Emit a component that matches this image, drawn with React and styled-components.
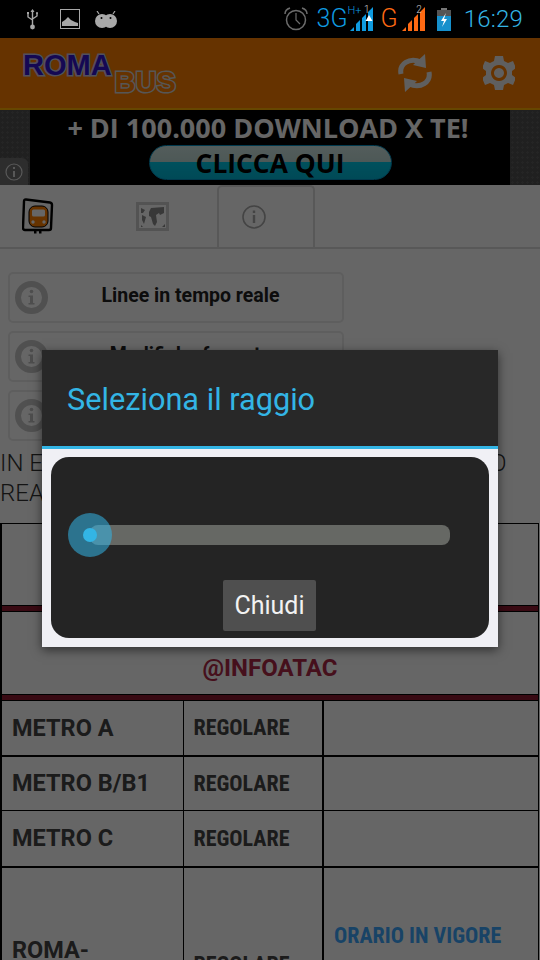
import React from "react";
import styled, { createGlobalStyle } from "styled-components";

const Global = createGlobalStyle`
  html, body {
    margin: 0;
    padding: 0;
    background: #000;
  }
  body {
    font-family: Roboto, "Liberation Sans", sans-serif;
  }
`;

const Phone = styled.div`
  position: relative;
  width: 540px;
  height: 960px;
  overflow: hidden;
  background: #fff;
`;

/* status bar */
const StatusBar = styled.div`
  height: 38px;
  background: #000;
  display: flex;
  align-items: center;
  justify-content: space-between;
  padding: 0 17px 0 27px;
  box-sizing: border-box;
`;
const StatusGroup = styled.div`
  display: flex;
  align-items: center;
`;
const NetText = styled.span`
  font-weight: 300;
  font-size: 25px;
  line-height: 38px;
  color: ${(p) => p.$color};
`;
const NetGroup = styled.div`
  position: relative;
  display: flex;
  align-items: center;
  margin-left: ${(p) => p.$left}px;
`;
const TinyMark = styled.span`
  position: absolute;
  top: ${(p) => p.$top}px;
  right: ${(p) => p.$right}px;
  font-size: ${(p) => p.$size}px;
  line-height: 1;
  font-weight: 300;
  color: ${(p) => p.$color};
`;
const Clock = styled.span`
  font-weight: 300;
  font-size: 24px;
  line-height: 38px;
  letter-spacing: 0.2px;
  color: #33b5e5;
  margin-left: 13px;
`;

/* action bar */
const ActionBar = styled.div`
  height: 72px;
  background: #ff8000;
  border-bottom: 2px solid #ffb000;
  box-sizing: border-box;
  display: flex;
  align-items: center;
  padding: 0 25px 0 23px;
`;
const Logo = styled.div`
  display: flex;
  flex: 1;
  font-family: "Liberation Sans", sans-serif;
  font-weight: 700;
`;
const LogoRoma = styled.span`
  font-size: 29px;
  line-height: 30px;
  margin-top: -8px;
  color: #3214d0;
  -webkit-text-stroke: 3px #c8c8e8;
  paint-order: stroke fill;
`;
const LogoBus = styled.span`
  font-size: 29px;
  line-height: 30px;
  margin: 9px 0 -9px 3px;
  color: #ff8000;
  -webkit-text-stroke: 3px #d8d8d8;
  paint-order: stroke fill;
`;
const ActionIcons = styled.div`
  display: flex;
  align-items: center;
  gap: 50px;
`;

/* ad banner */
const Ad = styled.div`
  position: relative;
  height: 75px;
  background-color: #505050;
  background-image: radial-gradient(#5e5e5e 1px, transparent 1.4px);
  background-size: 5px 5px;
  padding: 0 30px;
  box-sizing: border-box;
`;
const AdInner = styled.div`
  height: 75px;
  background: #000;
  display: flex;
  flex-direction: column;
  align-items: center;
`;
const AdTitle = styled.div`
  font-family: "Open Sans", "Liberation Sans", sans-serif;
  font-weight: 700;
  font-size: 27px;
  line-height: 35px;
  margin-right: 4px;
  color: #fff;
`;
const AdButton = styled.div`
  width: 243px;
  height: 35px;
  box-sizing: border-box;
  border: 1px solid #0090c0;
  border-radius: 18px;
  background: linear-gradient(#d0e8e4 0, #c0dcd8 50%, #00c8e8 50%, #00b8d8 100%);
  display: flex;
  align-items: center;
  justify-content: center;
  font-family: "Open Sans", "Liberation Sans", sans-serif;
  font-weight: 700;
  font-size: 26.4px;
  color: #000;
`;
const AdInfo = styled.div`
  position: absolute;
  left: 0;
  bottom: 0;
  width: 28px;
  height: 27px;
  background: #707070;
  border-top-right-radius: 6px;
  display: flex;
  align-items: center;
  justify-content: center;
`;

/* tabs */
const Tabs = styled.div`
  height: 64px;
  box-sizing: border-box;
  border-bottom: 2px solid #ddd;
  display: flex;
`;
const Tab = styled.div`
  width: ${(p) => p.$w}px;
  height: 62px;
  box-sizing: border-box;
  display: flex;
  align-items: center;
  justify-content: center;
  padding: 0 ${(p) => p.$pr || 0}px 0 ${(p) => p.$pl || 0}px;
  ${(p) =>
    p.$active &&
    `border: 2px solid #ddd;
     border-bottom: none;
     border-radius: 5px 5px 0 0;`}
`;

/* menu buttons */
const Menu = styled.div`
  padding: 23px 196px 0 8px;
  display: flex;
  flex-direction: column;
  gap: 8px;
`;
const MenuButton = styled.div`
  height: 51px;
  box-sizing: border-box;
  border: 2px solid #ebebeb;
  border-radius: 5px;
  display: flex;
  align-items: center;
  padding: 0 5px;
`;
const MenuLabel = styled.div`
  flex: 1;
  text-align: center;
  font-weight: 700;
  font-size: 19.5px;
  line-height: 22px;
  margin: -3px 4px 0 0;
  color: #222;
  white-space: nowrap;
`;

const Notice = styled.div`
  margin: 7px 0 0 0;
  height: 60px;
  font-size: 24px;
  line-height: 30px;
  font-weight: 300;
  color: #333;
  white-space: pre;
`;
const NoticeMiddle = styled.span`
  letter-spacing: 0.66px;
`;

/* table */
const Table = styled.table`
  width: 539px;
  margin: 15px 0 0 0;
  border-collapse: collapse;
  table-layout: fixed;
  td:first-child {
    border-left-width: 2px;
  }
  td:nth-child(2) {
    border-right-width: 2px;
  }
`;
const Row = styled.tr`
  height: ${(p) => p.$h}px;
  td {
    border-bottom-width: ${(p) => p.$line || 1}px;
  }
`;
const Cell = styled.td`
  border: 1px solid #000;
  padding: 0 10px;
  font-weight: 700;
  font-size: 24px;
  line-height: 30px;
  text-align: ${(p) => (p.$center ? "center" : "left")};
  color: #444;
`;
const NameCell = styled(Cell)`
  font-size: 23.5px;
`;
const StatusCell = styled(Cell)`
  font-stretch: condensed;
  font-size: 22px;
  line-height: 29px;
  color: ${(p) => p.$color || "#444"};
  padding-bottom: ${(p) => p.$pb || 0}px;
`;
const Divider = styled.td`
  height: 5px;
  padding: 0;
  background: #8f1a30;
  border: 1px solid #000;
`;
const Handle = styled.div`
  color: #b02848;
`;

/* dim + dialog */
const Dim = styled.div`
  position: absolute;
  left: 0;
  right: 0;
  top: 38px;
  bottom: 0;
  background: rgba(0, 0, 0, 0.6);
`;
const Dialog = styled.div`
  position: absolute;
  left: 42px;
  top: 350px;
  width: 456px;
  height: 297px;
  background: #f0f0f5;
  box-shadow: 0 3px 10px rgba(0, 0, 0, 0.55);
  display: flex;
  flex-direction: column;
`;
const DialogHead = styled.div`
  height: 94px;
  padding: 2px 25px 0;
  background: #282828;
  border-bottom: 3px solid #33b5e5;
  display: flex;
  align-items: center;
  font-size: 30.7px;
  color: #33b5e5;
`;
const DialogPanel = styled.div`
  margin: 8px 9px 0;
  height: 181px;
  background: #242424;
  border-radius: 18px;
  display: flex;
  flex-direction: column;
  align-items: center;
`;
const Slider = styled.div`
  position: relative;
  width: 360px;
  height: 20px;
  margin: 68px 0 0 0;
  background: #666864;
  border-radius: 8px;
`;
const ThumbHalo = styled.div`
  position: absolute;
  left: -22px;
  top: -12px;
  width: 44px;
  height: 44px;
  border-radius: 50%;
  background: rgba(51, 181, 229, 0.55);
`;
const ThumbDot = styled.div`
  position: absolute;
  left: -7px;
  top: 3px;
  width: 14px;
  height: 14px;
  border-radius: 50%;
  background: #33b5e5;
`;
const CloseButton = styled.div`
  margin: 35px 1px 0 0;
  width: 93px;
  height: 51px;
  background: #4f4f4f;
  border-radius: 2px;
  display: flex;
  align-items: center;
  justify-content: center;
  color: #f2f2f2;
  font-size: 25px;
`;

const UsbIcon = () => (
  <svg width="11" height="21" viewBox="0 0 11 21">
    <path d="M5.5 1v16M1 5v3l4.5 3M10 4v3l-4.5 3" fill="none" stroke="#a8a8a8" strokeWidth="1.4" />
    <path d="M5.5 0l2 3h-4z" fill="#a8a8a8" />
    <circle cx="5.5" cy="18" r="2.4" fill="#a8a8a8" />
    <rect x="0" y="3" width="2" height="2" fill="#a8a8a8" />
    <circle cx="10" cy="4" r="1" fill="#a8a8a8" />
  </svg>
);

const PictureIcon = () => (
  <svg width="20" height="20" viewBox="0 0 20 20">
    <rect x="0.5" y="0.5" width="19" height="19" fill="none" stroke="#a8a8a8" />
    <path d="M2 17v-4l3-2 3-3 3 3 2 1 2 1 3 1v3z" fill="#a8a8a8" />
  </svg>
);

const AndroidIcon = () => (
  <svg width="22" height="17" viewBox="0 0 22 17">
    <path d="M4 3L2 0M18 3l2-3" stroke="#a8a8a8" strokeWidth="1.2" />
    <ellipse cx="7" cy="10" rx="7" ry="7" fill="#a8a8a8" />
    <ellipse cx="15" cy="10" rx="7" ry="7" fill="#a8a8a8" />
    <circle cx="6.5" cy="7" r="1" fill="#000" />
    <circle cx="15.5" cy="7" r="1" fill="#000" />
  </svg>
);

const AlarmIcon = () => (
  <svg width="24" height="24" viewBox="0 0 24 24" fill="none" stroke="#6c6c6c">
    <circle cx="12" cy="13" r="9.5" strokeWidth="1.5" />
    <path d="M12 6v7l4 4" strokeWidth="1.2" />
    <path d="M1 7c0-3 2-5 5-6M23 7c0-3-2-5-5-6" strokeWidth="1.5" />
  </svg>
);

const Bars = ({ color, arrow }) => (
  <svg width="24" height="24" viewBox="0 0 24 24" fill={color}>
    <path d="M0 24l4-4v4zM6 24v-7l4-4v11zM12 24V11l4-4v17zM18 24V5l5-5v24z" />
    {arrow && <path d="M19 8l3.5 6h-7z" fill="#fff" />}
  </svg>
);

const BatteryIcon = () => (
  <svg width="14" height="23" viewBox="0 0 14 23">
    <rect x="4" y="0" width="6" height="2" fill="#777" />
    <rect x="0" y="2" width="14" height="21" fill="#1690cc" />
    <rect x="0" y="2" width="14" height="6" fill="#555" />
    <path d="M9 5L4 13h3l-2 6 5-8H7z" fill="#fff" />
  </svg>
);

const RefreshIcon = () => (
  <svg width="36" height="38" viewBox="0 0 36 38" fill="none">
    <path d="M4 20C2 10 12 3 24 8" stroke="#eee" strokeWidth="5" />
    <path d="M32 18c2 10-8 17-20 12" stroke="#eee" strokeWidth="5" />
    <path d="M28 0l1 14-13-3zM8 38L7 24l13 3z" fill="#eee" />
  </svg>
);

const GearIcon = () => (
  <svg width="32" height="34" viewBox="0 0 32 34">
    <path
      fill="#eee"
      fillRule="evenodd"
      d="M12 0h8l1 5 4 2 5-2 3 7-4 3v4l4 3-3 7-5-2-4 2-1 5h-8l-1-5-4-2-5 2-3-7 4-3v-4L-1 12l3-7 5 2 4-2zM16 9a8 8 0 1 0 .01 0zM16 12a5 5 0 1 1-.01 0z"
    />
  </svg>
);

const AdInfoIcon = () => (
  <svg width="18" height="18" viewBox="0 0 18 18" fill="none" stroke="#ddd" strokeWidth="1.2">
    <circle cx="9" cy="9" r="8" />
    <path d="M9 8v6M9 4v2" strokeWidth="2" />
  </svg>
);

const BusIcon = () => (
  <svg width="32" height="36" viewBox="0 0 32 36">
    <path
      d="M4 1.5L28 4.5Q30 4.8 30 7L29 30Q29 32 27 32H3Q1 32 1 30L2 3.5Q2 1.3 4 1.5z"
      fill="#fff"
      stroke="#000"
      strokeWidth="2.4"
    />
    <rect x="7" y="8" width="19" height="21" rx="6" fill="#ff8000" stroke="#000" strokeWidth="1" />
    <rect x="10" y="11.5" width="13" height="7" rx="1.5" fill="#fff" />
    <circle cx="11" cy="24" r="1.7" fill="#fff" />
    <circle cx="22" cy="24" r="1.7" fill="#fff" />
    <path d="M12 33h2.5v2.5H12zM17 33h2.5v2.5H17z" fill="#000" />
  </svg>
);

const MapIcon = () => (
  <svg width="33" height="29" viewBox="0 0 33 29">
    <rect x="1.5" y="1.5" width="30" height="26" fill="#fff" stroke="#d0d0d0" strokeWidth="3" />
    <path d="M15 6L28 5v6l-4 2-1-2-3 2 1 7-2 4-2-2-2-7-2-1v-4z" fill="#8c8c8c" />
    <path d="M5 6l4 2-2 3-2 0zM6 13l4 2-2 7-2-4zM26 25l3-3v3zM5 25v-2l2 2z" fill="#8c8c8c" />
  </svg>
);

const TabInfoIcon = () => (
  <svg width="24" height="24" viewBox="0 0 24 24" fill="none" stroke="#aaa" strokeWidth="1.6">
    <circle cx="12" cy="12" r="11" />
    <path d="M12 10v8M12 5.5v2.4" strokeWidth="2.4" />
  </svg>
);

const MenuInfoIcon = () => (
  <svg width="33" height="33" viewBox="0 0 33 33">
    <circle cx="16.5" cy="16.5" r="13.5" fill="#fff" stroke="#c8c8c8" strokeWidth="6" />
    <circle cx="16.5" cy="10.5" r="1.8" fill="#c0c0c0" />
    <path d="M13.5 14.5h4.5v7.5h1.5v1.5h-6V22H15v-6h-1.5z" fill="#c0c0c0" />
  </svg>
);

const menuItems = ["Linee in tempo reale", "Modifiche fermate", "Avvisi"];

const metroRows = [
  { name: "METRO A", h: 55, line: 2 },
  { name: "METRO B/B1", h: 55, line: 1 },
  { name: "METRO C", h: 56, line: 2 },
];

export default function App() {
  return (
    <Phone>
      <Global />
      <StatusBar>
        <StatusGroup>
          <UsbIcon />
          <NetGroup $left={22}>
            <PictureIcon />
          </NetGroup>
          <NetGroup $left={15}>
            <AndroidIcon />
          </NetGroup>
        </StatusGroup>
        <StatusGroup>
          <AlarmIcon />
          <NetGroup $left={9}>
            <NetText $color="#0f9be0">3G</NetText>
            <TinyMark $top={5} $right={-14} $size={11} $color="#0f9be0">H+</TinyMark>
          </NetGroup>
          <NetGroup $left={2}>
            <Bars color="#0f9be0" arrow />
            <TinyMark $top={-2} $right={4} $size={10} $color="#ccc">1</TinyMark>
          </NetGroup>
          <NetGroup $left={7}>
            <NetText $color="#ff6a13">G</NetText>
          </NetGroup>
          <NetGroup $left={4}>
            <Bars color="#ff6a13" />
            <TinyMark $top={-2} $right={4} $size={10} $color="#ccc">2</TinyMark>
          </NetGroup>
          <NetGroup $left={11}>
            <BatteryIcon />
          </NetGroup>
          <Clock>16:29</Clock>
        </StatusGroup>
      </StatusBar>

      <ActionBar>
        <Logo>
          <LogoRoma>ROMA</LogoRoma>
          <LogoBus>BUS</LogoBus>
        </Logo>
        <ActionIcons>
          <RefreshIcon />
          <GearIcon />
        </ActionIcons>
      </ActionBar>

      <Ad>
        <AdInner>
          <AdTitle>+ DI 100.000 DOWNLOAD X TE!</AdTitle>
          <AdButton>CLICCA QUI</AdButton>
        </AdInner>
        <AdInfo>
          <AdInfoIcon />
        </AdInfo>
      </Ad>

      <Tabs>
        <Tab $w={76}>
          <BusIcon />
        </Tab>
        <Tab $w={141} $pl={11}>
          <MapIcon />
        </Tab>
        <Tab $w={98} $active $pr={25}>
          <TabInfoIcon />
        </Tab>
      </Tabs>

      <Menu>
        {menuItems.map((label) => (
          <MenuButton key={label}>
            <MenuInfoIcon />
            <MenuLabel>{label}</MenuLabel>
          </MenuButton>
        ))}
      </Menu>

      <Notice>
        IN E<NoticeMiddle>VIDENZA: SITUAZIONE METRO IN TEMP</NoticeMiddle>O{"\n"}REALE
      </Notice>

      <Table>
        <colgroup>
          <col style={{ width: 182 }} />
          <col style={{ width: 140 }} />
          <col />
        </colgroup>
        <tbody>
          <Row $h={82}>
            <Cell colSpan={3} $center>
              INFO LIVE SU BUS, TRAM E SUBWAY
              <br />
              ROMA
            </Cell>
          </Row>
          <tr><Divider colSpan={3} /></tr>
          <Row $h={83}>
            <Cell colSpan={3} $center>
              INFO E AGGIORNAMENTI SU TWITTER
              <Handle>@INFOATAC</Handle>
            </Cell>
          </Row>
          <tr><Divider colSpan={3} /></tr>
          {metroRows.map((r) => (
            <Row key={r.name} $h={r.h} $line={r.line}>
              <NameCell>{r.name}</NameCell>
              <StatusCell>REGOLARE</StatusCell>
              <Cell />
            </Row>
          ))}
          <Row $h={196}>
            <NameCell>ROMA-GIARDINETTI</NameCell>
            <StatusCell>REGOLARE</StatusCell>
            <StatusCell $color="#3da8ff" $pb={58}>ORARIO IN VIGORE</StatusCell>
          </Row>
        </tbody>
      </Table>

      <Dim />
      <Dialog>
        <DialogHead>Seleziona il raggio</DialogHead>
        <DialogPanel>
          <Slider>
            <ThumbHalo />
            <ThumbDot />
          </Slider>
          <CloseButton>Chiudi</CloseButton>
        </DialogPanel>
      </Dialog>
    </Phone>
  );
}
